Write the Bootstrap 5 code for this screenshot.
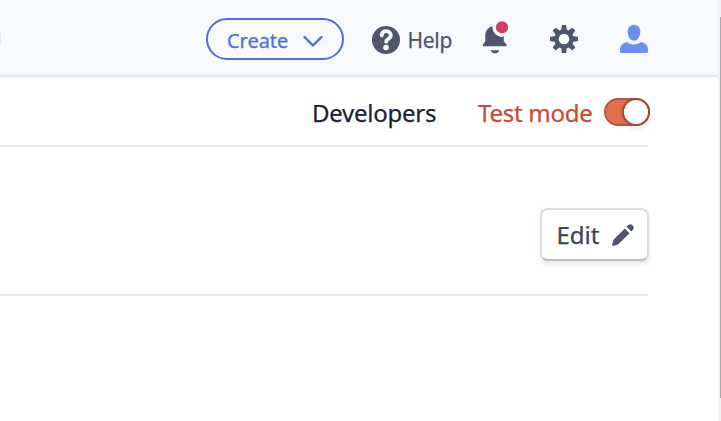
<!DOCTYPE html>
<html lang="en">
<head>
<meta charset="utf-8">
<meta name="viewport" content="width=device-width, initial-scale=1">
<title>Developers</title>
<link href="https://cdn.jsdelivr.net/npm/bootstrap@5.3.0/dist/css/bootstrap.min.css" rel="stylesheet">
<style>
body { font-family: "Noto Sans", "Open Sans", sans-serif; height: 421px; overflow: hidden; color: #1a1f36; }
svg { display: block; flex: none; }
.page-area { width: 718px; }
.topbar { height: 77px; background: #f6fafd; border-bottom: 2px solid #e3e8ee; padding-right: 70px; }
.left-edge { width: 1px; height: 12px; background: #e3e8ee; margin-top: 2px; }
.btn-create { width: 138px; height: 42px; border: 2px solid #556cd6; border-radius: 21px; color: #556cd6; font-size: 20px; line-height: 1; padding: 2px 19px 0; margin: 3px 28px 0 0; -webkit-text-stroke: .25px; }
.create-label { width: 61px; letter-spacing: -.05px; padding-top: 1px; white-space: nowrap; }
.help-label { font-size: 21px; line-height: 28px; color: #4f566b; width: 44px; margin: 0 29px 0 7.500px; padding-top: 5px; letter-spacing: -.3px; -webkit-text-stroke: .25px; }
.tool { margin-top: 3px; }
.bell { margin: 0 41.500px 2px 0; }
.gear { margin-right: 42px; }
.content { width: 648px; }
.mode-row { height: 70px; border-bottom: 2px solid #e3e8ee; font-size: 24px; line-height: 32px; }
.dev-label, .test-label { letter-spacing: -.25px; padding-top: 3px; white-space: nowrap; -webkit-text-stroke: .25px; }
.dev-label { width: 124px; margin-right: 42px; }
.test-label { width: 115px; margin-right: 11px; color: #c44c34; }
.toggle { width: 46px; height: 28px; border-radius: 14px; background: #e56f4a; border: 2px solid #bb5541; margin: 2px -2px 0 0; }
.knob { width: 28px; height: 28px; border-radius: 50%; background: #fff; border: 2px solid #9e4b3c; box-shadow: 0 3px 5px rgba(60,66,87,.12); margin-right: -2px; }
.edit-row { height: 149px; border-bottom: 2px solid #e3e8ee; padding-top: 61px; }
.btn-edit { width: 109px; height: 53px; margin-right: -1px; border: 2px solid #dcdde1; border-bottom-color: #bcbdc2; border-radius: 8px; background: #fff; color: #3c4257; font-size: 24px; line-height: 1; padding: 0 13px 0 14.500px; box-shadow: 0 3px 5px rgba(60,66,87,.12); -webkit-text-stroke: .25px; }
.scroll-track { width: 3px; background: #f1f1f1; padding-top: 17px; }
.scroll-thumb { width: 1px; height: 381px; background: #a9a9a9; }
</style>
<script src="https://cdn.jsdelivr.net/npm/bootstrap@5.3.0/dist/js/bootstrap.bundle.min.js"></script>
</head>
<body class="d-flex bg-white">
<div class="page-area">
  <header class="topbar d-flex align-items-center">
    <span class="left-edge me-auto"></span>
    <button class="btn-create bg-transparent d-flex align-items-center justify-content-between" type="button">
      <span class="create-label text-start">Create</span>
      <svg width="20" height="14" viewBox="0 0 20 14" fill="none" stroke="#556cd6" stroke-width="2.4" stroke-linecap="round" stroke-linejoin="round"><path d="M1.500 4L10 12.500l8.500-8.500"/></svg>
    </button>
    <svg class="mt-1" width="28" height="28" viewBox="0 0 28 28"><circle cx="14" cy="14" r="14" fill="#4f566b"/><path d="M9.700 9.300C10 6.700 11.700 5.200 14.200 5.200C16.900 5.200 18.800 6.800 18.800 9.300C18.800 11.600 17.300 12.500 15.800 13.400C14.500 14.200 14.200 14.700 14.200 15.700" fill="none" stroke="#f6fafd" stroke-width="3.800" stroke-linecap="round"/><circle cx="14" cy="21.500" r="2.800" fill="#f6fafd"/></svg>
    <span class="help-label">Help</span>
    <svg class="bell" width="28" height="36" viewBox="0 0 28 36"><path d="M14 7C7.500 7 4.300 11.500 4.300 17v5.500L2 25.500v1.800h23.600v-1.800L22.800 22.500V17C22.800 11.500 20 7 14 7z" fill="#4f566b"/><path d="M9.500 31.200h8.800c-.7 2-2.200 3.100-4.400 3.100s-3.700-1.100-4.400-3.100z" fill="#4f566b"/><circle cx="21" cy="8.300" r="9.600" fill="#f6fafd"/><circle cx="21" cy="8.300" r="6.100" fill="#cd3d64"/></svg>
    <svg class="gear tool" width="28" height="28" viewBox="0 0 28 28"><g fill="#4f566b"><g id="teeth"><path id="tooth" d="M11.800.6q0-.6.600-.6h3.200q.6 0 .6.600L16.900 6h-5.800zM11.800 27.400q0 .6.600.6h3.200q.6 0 .6-.6L16.900 22h-5.800z"/><use href="#tooth" transform="rotate(90 14 14)"/></g><use href="#teeth" transform="rotate(45 14 14)"/></g><circle cx="14" cy="14" r="7.500" fill="none" stroke="#4f566b" stroke-width="4.400"/></svg>
    <svg class="tool" width="28" height="28" viewBox="0 0 28 28" fill="#6c8eef"><path d="M14 0c4 0 6.300 2.700 6.300 6.500C20.300 11 18 15.800 14 15.800S7.700 11 7.700 6.500C7.700 2.700 10 0 14 0z"/><path d="M7 17c1.600 1.500 4 2.500 7 2.500s5.400-1 7-2.500c4.200 1 7 3.500 7 7.500v2q0 1.500-1.500 1.500h-25Q0 28 0 26.500v-2C0 20.500 2.800 18 7 17z"/></svg>
  </header>
  <main class="content">
    <div class="mode-row d-flex align-items-center justify-content-end">
      <span class="dev-label">Developers</span>
      <span class="test-label">Test mode</span>
      <span class="toggle d-flex align-items-center justify-content-end"><span class="knob"></span></span>
    </div>
    <div class="edit-row d-flex justify-content-end align-items-start">
      <button class="btn-edit d-flex align-items-center justify-content-between" type="button">
        <span>Edit</span>
        <svg width="22" height="22" viewBox="0 0 22 22" fill="#4f566b"><path d="M12.800 4.500l4.700 4.700L6 20.500 1 22 0 21l1.500-5.200zM14.500 2.800l1.700-1.700q2-1.800 4 0l.7.700q1.800 2 0 4l-1.700 1.700z"/></svg>
      </button>
    </div>
  </main>
</div>
<div class="scroll-track d-flex justify-content-end"><div class="scroll-thumb"></div></div>
</body>
</html>
